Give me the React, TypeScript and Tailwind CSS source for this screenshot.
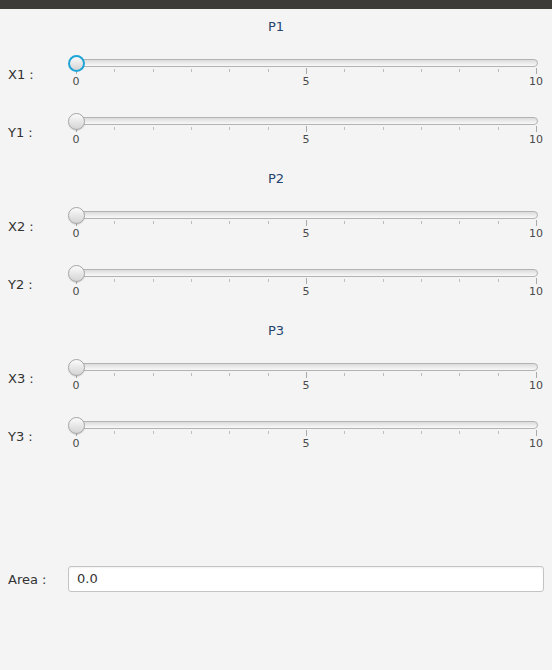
import React from "react";

const TICKS = Array.from({ length: 13 }, (_, i) => i);

const Slider = ({ focused = false }: { focused?: boolean }) => {
  return (
    <div className="relative w-[476px] h-[58px]">
      {/* Track */}
      <div className="absolute left-[2px] right-[6px] top-[14px] h-[8px] rounded-full border border-[#b3b3b3] bg-gradient-to-b from-[#dcdcdc] to-[#f9f9f9]" />

      {/* Ticks: 0..10, major at 0/5/10 */}
      <div className="absolute left-[8px] w-[461px] top-[23px] flex justify-between items-start">
        {TICKS.map((t) => (
          <div
            key={t}
            className={
              t % 6 === 0
                ? "w-px h-[6px] bg-[#a9a9a9]"
                : "w-px h-[3px] mt-[1px] bg-[#bdbdbd]"
            }
          />
        ))}
      </div>

      {/* Tick labels */}
      <div className="absolute left-[8px] w-[461px] top-[30px] h-[14px] text-[11px] leading-[14px] text-[#4a4a4a]">
        <span className="absolute left-0 -translate-x-1/2">0</span>
        <span className="absolute left-[230px] -translate-x-1/2">5</span>
        <span className="absolute left-[460px] -translate-x-1/2">10</span>
      </div>

      {/* Thumb */}
      <div
        className={`absolute left-0 top-[10px] w-[17px] h-[17px] rounded-full bg-gradient-to-b from-[#fbfbfb] to-[#d4d4d4] ${
          focused
            ? "border-2 border-[#1fa4d6]"
            : "border border-[#a5a5a5] shadow-[0_1px_1px_rgba(0,0,0,0.12)]"
        }`}
      />
    </div>
  );
};

const SliderRow = ({ label, focused }: { label: string; focused?: boolean }) => (
  <div className="flex h-[58px]">
    <div className="w-[68px] pl-[8px] pt-[22px] text-[13px] leading-[16px] text-[#333333]">
      {label}
    </div>
    <Slider focused={focused} />
  </div>
);

const Section = ({
  title,
  n,
  focusFirst,
}: {
  title: string;
  n: number;
  focusFirst?: boolean;
}) => (
  <div className="flex flex-col">
    <div className="h-[36px] flex items-center justify-center text-[13px] text-[#26456f]">
      {title}
    </div>
    <SliderRow label={`X${n} :`} focused={focusFirst} />
    <SliderRow label={`Y${n} :`} />
  </div>
);

export default function App() {
  return (
    <div
      className="w-[552px] h-[670px] bg-[#f4f4f4] flex flex-col overflow-hidden"
      style={{ fontFamily: '"DejaVu Sans", Verdana, sans-serif' }}
    >
      <div className="h-[9px] bg-[#3d3c37]" />

      <Section title="P1" n={1} focusFirst />
      <Section title="P2" n={2} />
      <Section title="P3" n={3} />

      <div className="mt-[101px] flex items-center h-[26px]">
        <div className="w-[68px] pl-[8px] pt-[1px] text-[13px] text-[#333333]">Area :</div>
        <div className="w-[476px] h-[26px] rounded-[3px] border border-[#c4c4c4] bg-white shadow-[inset_0_1px_2px_rgba(0,0,0,0.06)] flex items-center px-[8px] text-[13px] text-[#333333]">
          0.0
        </div>
      </div>
    </div>
  );
}
